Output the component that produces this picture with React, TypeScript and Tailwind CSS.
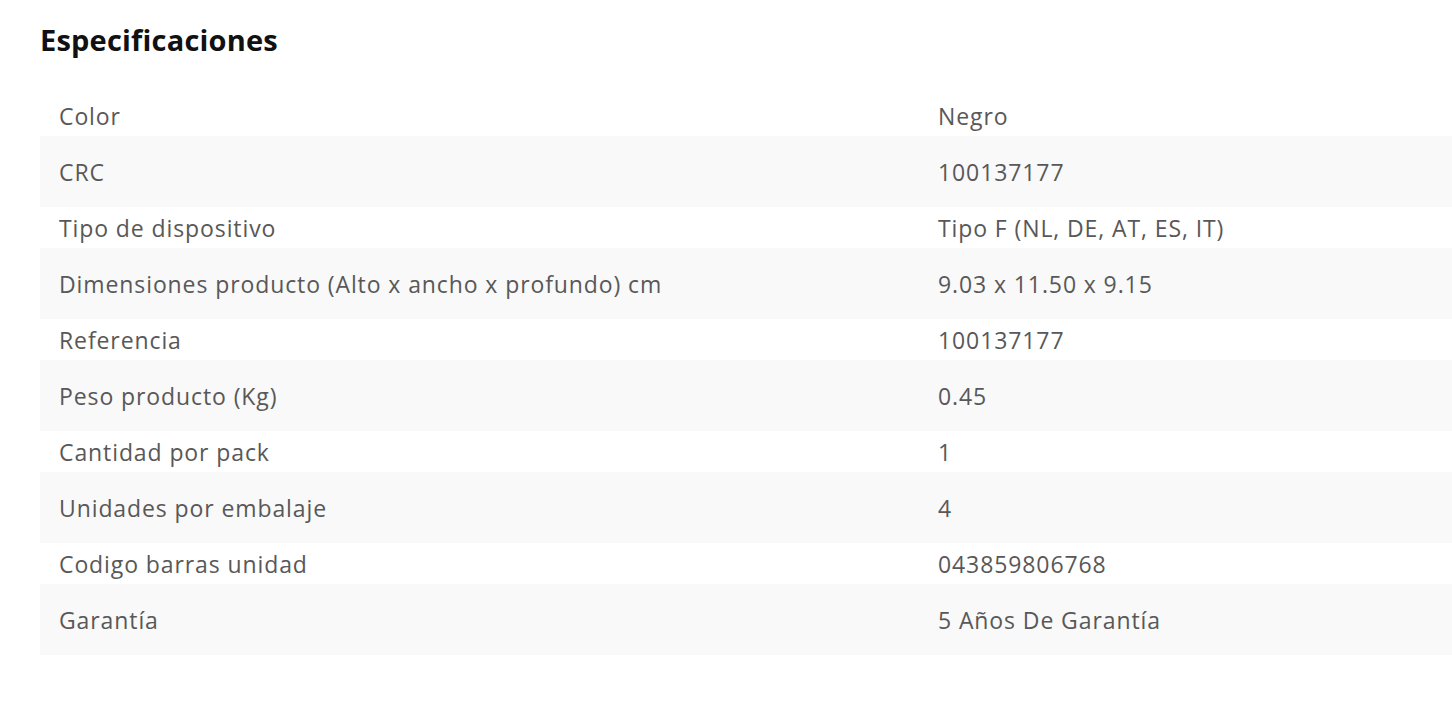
const specs: [string, string][] = [
  ['Color', 'Negro'],
  ['CRC', '100137177'],
  ['Tipo de dispositivo', 'Tipo F (NL, DE, AT, ES, IT)'],
  ['Dimensiones producto (Alto x ancho x profundo) cm', '9.03 x 11.50 x 9.15'],
  ['Referencia', '100137177'],
  ['Peso producto (Kg)', '0.45'],
  ['Cantidad por pack', '1'],
  ['Unidades por embalaje', '4'],
  ['Codigo barras unidad', '043859806768'],
  ['Garantía', '5 Años De Garantía'],
];

export default function App() {
  return (
    <div
      className="min-h-[710px] bg-white pl-10 pt-[22px]"
      style={{ fontFamily: '"Open Sans", Lato, sans-serif' }}
    >
      <h2 className="text-[29px] font-bold leading-9 tracking-[0.2px] text-[#111]">
        Especificaciones
      </h2>

      <div className="mt-[37px] flex flex-col">
        {specs.map(([label, value], i) => (
          <div
            key={label}
            className={`flex items-center pt-px text-[23px] tracking-[0.9px] text-[#585858] ${
              i % 2 === 1 ? 'h-[71px] bg-[#f9f9f9]' : 'h-[41px] bg-white'
            }`}
          >
            <div className="w-[898px] shrink-0 pl-[19px]">{label}</div>
            <div>{value}</div>
          </div>
        ))}
      </div>
    </div>
  );
}
